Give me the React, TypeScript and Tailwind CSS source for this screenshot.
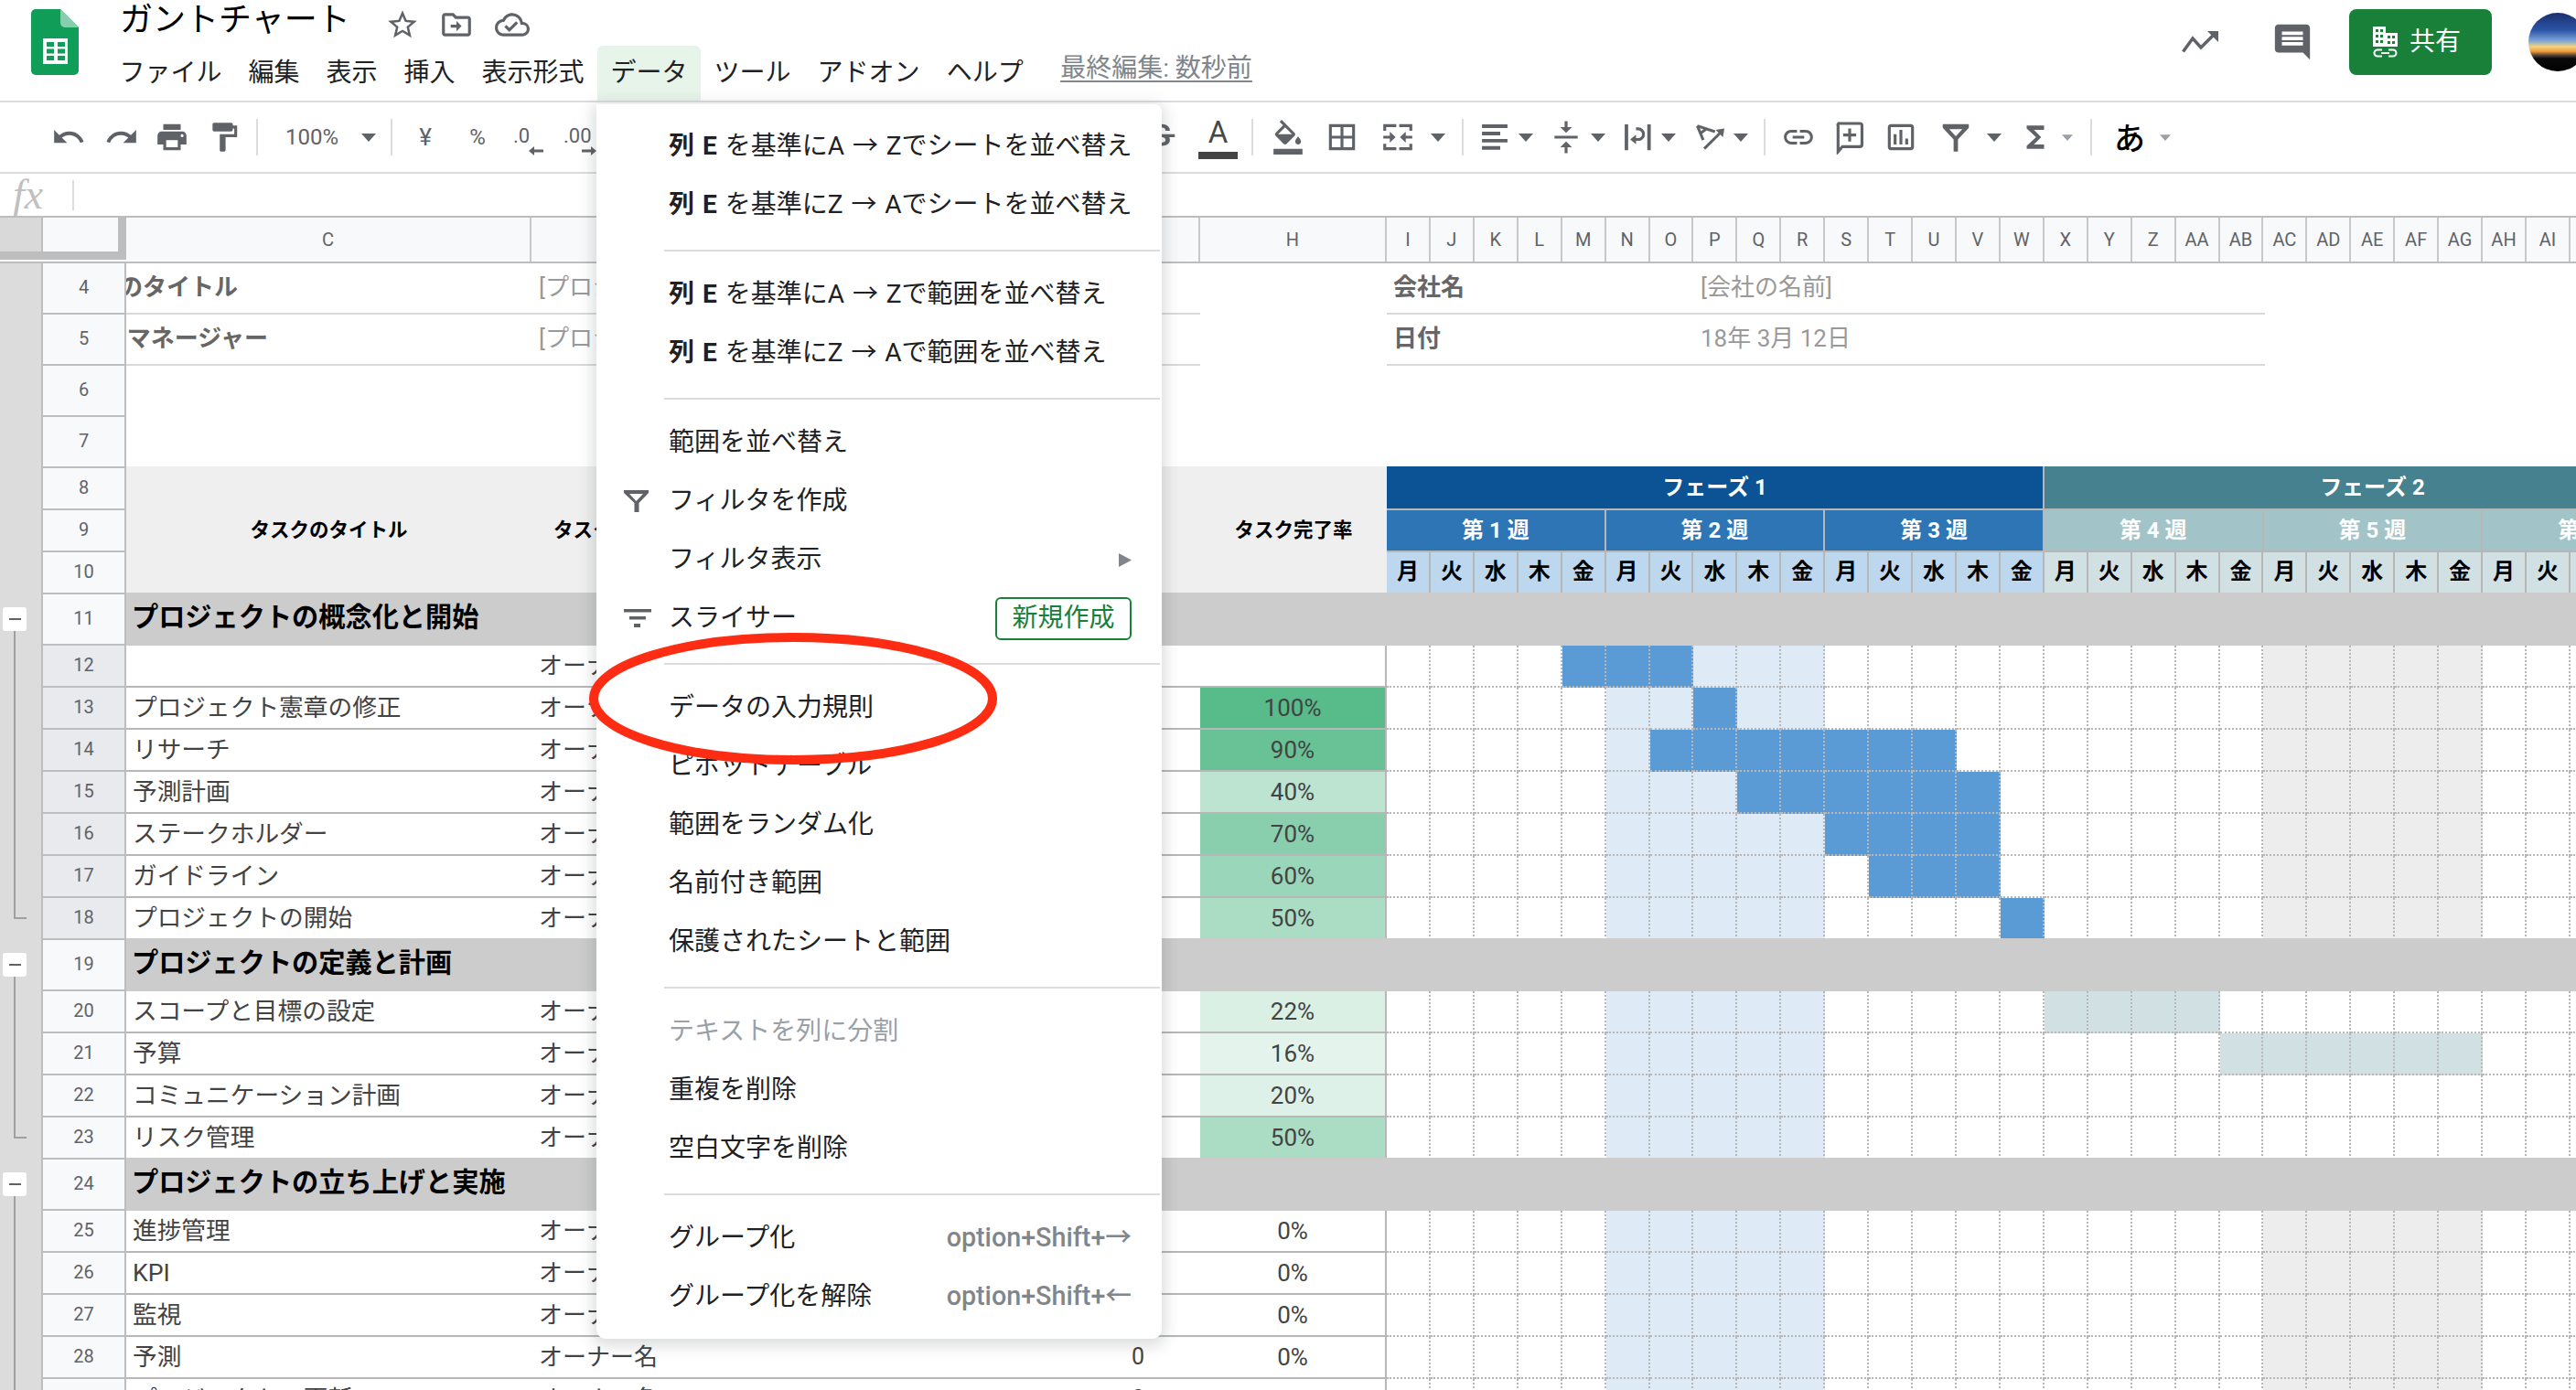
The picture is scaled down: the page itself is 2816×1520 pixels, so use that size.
import clsx from "clsx";
import {
  MdBorderAll,
  MdFormatColorFill,
  MdFormatPaint,
  MdFunctions,
  MdInsertComment,
  MdLink,
  MdOutlineCloudDone,
  MdOutlineInsertChart,
  MdPrint,
  MdRedo,
  MdStarBorder,
  MdStrikethroughS,
  MdUndo,
  MdVerticalAlignCenter,
} from "react-icons/md";

const ICON = "w-[38px] h-[38px] shrink-0 text-[#5f6368]";

function Logo() {
  return (
    <svg viewBox="0 0 52 72" className="w-[52px] h-[72px]">
      <path d="M32 0H5a5 5 0 0 0-5 5v62a5 5 0 0 0 5 5h42a5 5 0 0 0 5-5V20L32 0z" fill="#0f9d58" />
      <path d="M32 0l20 20H37a5 5 0 0 1-5-5V0z" fill="#87ceac" />
      <path d="M13 32h27v28H13z" fill="#fff" />
      <path d="M17 36h8v5h-8zM29 36h8v5h-8zM17 43.500h8v5h-8zM29 43.500h8v5h-8zM17 51h8v5h-8zM29 51h8v5h-8z" fill="#0f9d58" />
    </svg>
  );
}

function Caret({ className, small }: { className?: string; small?: boolean }) {
  return (
    <svg viewBox="0 0 16 9" className={clsx("shrink-0", small ? "w-[12px] h-[7px]" : "w-[16px] h-[9px]", className)}>
      <polygon points="0,0 16,0 8,9" fill={small ? "#9aa0a6" : "#5f6368"} />
    </svg>
  );
}

function Sep({ className }: { className?: string }) {
  return <div className={clsx("w-[2px] h-[40px] bg-[#dadce0] shrink-0", className)} />;
}

function DecimalIcon({ label, dir, className }: { label: string; dir: "l" | "r"; className?: string }) {
  return (
    <div className={clsx("flex flex-col mt-[8px] shrink-0 text-[#5f6368]", className)}>
      <span className="text-[22px] leading-[22px]">{label}</span>
      <svg viewBox="0 0 16 10" className="w-[16px] h-[10px] self-end">
        {dir === "l" ? <path d="M0 5l6-5v3.500h10v3H6V10z" fill="#5f6368" /> : <path d="M16 5l-6-5v3.500H0v3h10V10z" fill="#5f6368" />}
      </svg>
    </div>
  );
}

function Toolbar() {
  return (
    <div className="h-[78px] border-b-2 border-[#dadce0] flex items-center">
      <MdUndo className={clsx(ICON, "ml-[56px]")} />
      <MdRedo className={clsx(ICON, "ml-[20px]")} />
      <MdPrint className={clsx(ICON, "ml-[17px]")} />
      <MdFormatPaint className={clsx(ICON, "ml-[19px]")} />
      <Sep className="ml-[16px]" />
      <span className="ml-[30px] w-[60px] text-[24px] text-[#5f6368] shrink-0">100%</span>
      <Caret className="ml-[23px]" />
      <Sep className="ml-[16px]" />
      <span className="ml-[24px] w-[24px] text-center text-[26px] text-[#5f6368] shrink-0">¥</span>
      <span className="ml-[31px] w-[28px] text-center text-[24px] text-[#5f6368] shrink-0">%</span>
      <DecimalIcon label=".0" dir="l" className="ml-[25px] w-[33px]" />
      <DecimalIcon label=".00" dir="r" className="ml-[22px] w-[36px]" />
      <MdStrikethroughS className={clsx(ICON, "ml-[599px]")} />
      <div className="ml-[21px] mt-[4px] w-[43px] shrink-0 flex flex-col items-center">
        <span className="text-[33px] leading-[30px] text-[#444746]">A</span>
        <div className="w-[43px] h-[8px] bg-[#444] mt-[6px]" />
      </div>
      <Sep className="ml-[15px]" />
      <MdFormatColorFill className={clsx(ICON, "ml-[19px]")} />
      <MdBorderAll className={clsx(ICON, "ml-[21px]")} />
      <svg viewBox="0 0 24 24" className={clsx(ICON, "ml-[23px]")} fill="currentColor">
        <path d="M2 3h9v2H4v2.500H2zM22 3h-9v2h7v2.500h2zM2 21h9v-2H4v-2.500H2zM22 21h-9v-2h7v-2.500h2zM2 11h4.500V8.200L10.500 12l-4 3.800V13H2zM22 11h-4.500V8.200L13.500 12l4 3.800V13H22z" />
      </svg>
      <Caret className="ml-[17px]" />
      <Sep className="ml-[18px]" />
      <svg viewBox="0 0 24 24" className={clsx(ICON, "ml-[15px]")} fill="currentColor">
        <path d="M3.200 3.200h17.600v2.500H3.200zM3.200 8.200h12.600v2.500H3.200zM3.200 13.200h17.600v2.500H3.200zM3.200 18.200h12.600v2.500H3.200z" />
      </svg>
      <Caret className="ml-[7px]" />
      <MdVerticalAlignCenter className={clsx(ICON, "ml-[17px]")} />
      <Caret className="ml-[8px]" />
      <svg viewBox="0 0 24 24" className={clsx(ICON, "ml-[16px]")}>
        <path d="M3.200 3.200h2.400V21H3.200zM18.800 3.200h2.400V21h-2.400z" fill="currentColor" />
        <path d="M11 6.200h1.500a3.700 3.700 0 0 1 0 7.400H10" fill="none" stroke="currentColor" strokeWidth="2" />
        <path d="M7 13.600l4-3.300v6.600z" fill="currentColor" />
      </svg>
      <Caret className="ml-[7px]" />
      <svg viewBox="0 0 24 24" className={clsx(ICON, "ml-[19px]")}>
        <path d="M2.800 4.200L15 8.200M2.800 4.200L6.900 14M4.800 9.500L9.600 5.900M7.600 20L19.500 8.200" fill="none" stroke="currentColor" strokeWidth="1.900" />
        <path d="M21.500 6l-6 1 5 5z" fill="currentColor" />
      </svg>
      <Caret className="ml-[6px]" />
      <Sep className="ml-[17px]" />
      <MdLink className={clsx(ICON, "ml-[17px]")} />
      <svg viewBox="0 0 24 24" className={clsx(ICON, "ml-[18px]")} fill="none" stroke="currentColor" strokeWidth="2">
        <path d="M5 2.500h14a1.500 1.500 0 0 1 1.500 1.500v13a1.500 1.500 0 0 1-1.500 1.500H7L4 22V4a1 1 0 0 1 1-1.500zM12 6v9M7.500 10.500h9" />
      </svg>
      <MdOutlineInsertChart className={clsx(ICON, "ml-[18px]")} />
      <FilterIcon className={clsx(ICON, "ml-[22px]")} />
      <Caret className="ml-[15px]" />
      <MdFunctions className={clsx(ICON, "ml-[18px]")} />
      <Caret small className="ml-[10px]" />
      <Sep className="ml-[19px]" />
      <span className="ml-[24px] mt-[4px] w-[34px] text-[34px] leading-none text-black font-medium shrink-0">あ</span>
      <Caret small className="ml-[16px]" />
    </div>
  );
}

function FilterIcon({ className }: { className?: string }) {
  return (
    <svg viewBox="0 0 24 24" className={className} fill="currentColor">
      <path fillRule="evenodd" d="M3 3h18v2.500l-7.500 8V22h-3v-8.500L3 5.500V3zm4.500 3.500L12 11.300l4.500-4.800h-9z" />
    </svg>
  );
}

function TitleBar() {
  const menus = ["ファイル", "編集", "表示", "挿入", "表示形式", "データ", "ツール", "アドオン", "ヘルプ"];
  return (
    <div className="h-[112px] border-b-2 border-[#dadce0] flex">
      <div className="pl-[34px] pt-[10px] w-[131px] shrink-0">
        <Logo />
      </div>
      <div className="flex flex-col shrink-0">
        <div className="h-[52px] flex items-center pt-[4px]">
          <span className="text-[36px] leading-none text-black -mt-[11px] w-[252px]">ガントチャート</span>
          <MdStarBorder className={clsx(ICON, "ml-[38px]")} />
          <svg viewBox="0 0 24 24" className={clsx(ICON, "ml-[21px]")} fill="currentColor">
            <path d="M20 6h-8l-2-2H4c-1.100 0-2 .9-2 2v12c0 1.100.9 2 2 2h16c1.100 0 2-.9 2-2V8c0-1.100-.9-2-2-2zm0 12H4V6h5.170l2 2H20v10zM12 9.500l3.500 3.500-3.500 3.500V14H8v-2h4V9.500z" />
          </svg>
          <MdOutlineCloudDone className={clsx(ICON, "ml-[23px]")} />
        </div>
        <div className="h-[62px] flex items-center -ml-[15px]">
          {menus.map((m) => (
            <div
              key={m}
              className={clsx(
                "h-full px-[14.5px] flex items-center text-[28px] text-[#202124]",
                m === "データ" && "bg-[#e6f4ea] rounded-t-[6px]"
              )}
            >
              {m}
            </div>
          ))}
          <span className="ml-[26px] pb-[10px] text-[28px] text-[#80868b] underline underline-offset-[4px] decoration-2 whitespace-nowrap">
            最終編集: 数秒前
          </span>
        </div>
      </div>
      <div className="ml-auto -mr-[12px] h-[92px] flex items-center shrink-0">
        <svg viewBox="0 0 40 24" className="w-[40px] h-[24px]">
          <path d="M1.500 22.500L12 8l9 10L34 5" fill="none" stroke="#5f6368" strokeWidth="3.500" />
          <path d="M28 0h12v12z" fill="#5f6368" />
        </svg>
        <MdInsertComment className="ml-[58px] w-[46px] h-[46px] text-[#5f6368]" />
        <button className="ml-[39px] w-[156px] h-[72px] rounded-[8px] bg-[#188038] text-white flex items-center pl-[26px]">
          <svg viewBox="0 0 27 34" className="w-[27px] h-[34px]">
            <path fillRule="evenodd" d="M0 0h14v7h13v15H0V0zm3 3v3h3V3H3zm5 0v3h3V3H8zM3 9v3h3V9H3zm5 0v3h3V9H8zm8 1v3h3v-3h-3zm5 0v3h3v-3h-3zM3 15v3h3v-3H3zm5 0v3h3v-3H8zm8 1v3h3v-3h-3zm5 0v3h3v-3h-3z" fill="#fff" />
            <path d="M10 25.500H5a3.500 3.500 0 0 0 0 7h5M17 25.500h5a3.500 3.500 0 0 1 0 7h-5M9 29h9" fill="none" stroke="#fff" strokeWidth="2" />
          </svg>
          <span className="ml-[13px] text-[28px]">共有</span>
        </button>
        <div className="ml-[40px] w-[64px] h-[64px] rounded-full bg-[linear-gradient(180deg,#1c2f6e_0%,#2c55a8_30%,#7fa6d8_48%,#f6d37a_58%,#ef9a3c_66%,#5c4a3c_72%,#0a0a0a_78%,#000_100%)]" />
      </div>
    </div>
  );
}

function FormulaBar() {
  return (
    <div className="h-[46px] flex items-center pl-[14px]">
      <span className="font-[family-name:'Liberation_Serif',serif] italic text-[46px] leading-none text-[#c0c0c0] w-[65px]">fx</span>
      <div className="w-[2px] h-[33px] bg-[#dadce0]" />
    </div>
  );
}

const COLS = ["I", "J", "K", "L", "M", "N", "O", "P", "Q", "R", "S", "T", "U", "V", "W", "X", "Y", "Z", "AA", "AB", "AC", "AD", "AE", "AF", "AG", "AH", "AI", "AJ"];

function ColumnHeader() {
  const cell = "h-full shrink-0 flex items-center justify-center border-r-2 border-[#c8c8c8]";
  return (
    <div className="h-[52px] flex border-y-2 border-[#bdbdbd] text-[20px] text-[#5f6368] bg-[#f8f9fa] shrink-0">
      <div className="w-[45px] h-[46px] bg-[#d9d9d9] border-b-[9px] border-[#bdbdbd] shrink-0" />
      <div className="w-[93px] h-[46px] bg-[#f8f9fa] border-l-2 border-r-[9px] border-b-[9px] border-[#bdbdbd] shrink-0" />
      <div className={clsx(cell, "w-[443px]")}>C</div>
      <div className={clsx(cell, "w-[731px]")}>D</div>
      <div className={clsx(cell, "w-[204px]")}>H</div>
      {COLS.map((c) => (
        <div key={c} className={clsx(cell, "w-[47.93px]")}>{c}</div>
      ))}
    </div>
  );
}

type GutterKind = "box" | "line" | "end" | "none";

function Gutter({ kind }: { kind: GutterKind }) {
  return (
    <div className="relative w-[45px] h-full bg-[#dcdcdc] shrink-0">
      {kind === "box" && (
        <>
          <div className="absolute left-[3px] top-[14px] w-[26px] h-[26px] rounded-[3px] bg-white flex items-center justify-center">
            <div className="w-[13px] h-[2px] bg-[#5f6368]" />
          </div>
          <div className="absolute left-[15px] top-[40px] bottom-0 w-[2px] bg-[#a0a0a0]" />
        </>
      )}
      {kind === "line" && <div className="absolute left-[15px] top-0 bottom-0 w-[2px] bg-[#a0a0a0]" />}
      {kind === "end" && (
        <>
          <div className="absolute left-[15px] top-0 h-[23px] w-[2px] bg-[#a0a0a0]" />
          <div className="absolute left-[15px] top-[21px] h-[2px] w-[14px] bg-[#a0a0a0]" />
        </>
      )}
    </div>
  );
}

function Row({
  num,
  h,
  gutter = "none",
  active,
  children,
}: {
  num: number;
  h: string;
  gutter?: GutterKind;
  active?: boolean;
  children?: React.ReactNode;
}) {
  return (
    <div className={clsx("flex shrink-0", h)}>
      <Gutter kind={gutter} />
      <div
        className={clsx(
          "w-[93px] h-full shrink-0 flex items-center justify-center pb-[2px] border-x-2 border-b-2 border-[#bdbdbd] text-[20px] text-[#5f6368]",
          active ? "bg-[#e8eaed]" : "bg-[#f8f9fa]"
        )}
      >
        {num}
      </div>
      {children}
    </div>
  );
}

function InfoRow({ num, title, titleW, company, value, label }: { num: number; title: string; titleW: string; company: string; value: string; label: string }) {
  return (
    <Row num={num} h="h-[56px]">
      <div className="w-[443px] h-full shrink-0 pb-[2px] border-b-2 border-[#d9d9d9] overflow-hidden flex items-center">
        <div className={clsx("overflow-hidden flex justify-end text-[26px] font-bold text-[#666] whitespace-nowrap", titleW)}>
          {title}
        </div>
      </div>
      <div className="w-[731px] h-full shrink-0 pb-[2px] border-b-2 border-[#d9d9d9] flex items-center pl-[8px] text-[26px] text-[#999] whitespace-nowrap overflow-hidden">
        {company}
      </div>
      <div className="w-[204px] shrink-0" />
      <div className="w-[960px] h-full shrink-0 pb-[2px] border-b-2 border-[#d9d9d9] flex items-center pl-[7px] text-[26px]">
        <span className="w-[336px] font-bold text-[#666]">{label}</span>
        <span className="text-[#999]">{value}</span>
      </div>
    </Row>
  );
}

function GroupRow({ num, title }: { num: number; title: string }) {
  return (
    <Row num={num} h="h-[56px]" gutter="box">
      <div className="flex-1 h-[58px] -mt-[2px] pb-[2px] bg-[#cccccc] flex items-center pl-[6px] text-[29.200px] font-bold text-black whitespace-nowrap">
        {title}
      </div>
    </Row>
  );
}

type Task = {
  num: number;
  name: string;
  pct: string;
  pctBg: string;
  blue?: [number, number];
  teal?: [number, number];
  gray: boolean;
  gutter: GutterKind;
  active?: boolean;
  count?: string;
};

function GanttCell({ i, task }: { i: number; task: Task }) {
  const inBlue = task.blue && i >= task.blue[0] && i <= task.blue[1];
  const inTeal = task.teal && i >= task.teal[0] && i <= task.teal[1];
  return (
    <div
      className={clsx(
        "w-[47.93px] h-full shrink-0 border-r-2 border-b-2 border-dotted border-[#b7b7b7]",
        inBlue
          ? "bg-[#5b9bd5]"
          : inTeal
            ? "bg-[#d0e0e3]"
            : i >= 5 && i <= 9
              ? "bg-[#deebf7]"
              : task.gray && i >= 20 && i <= 24
                ? "bg-[#ededed]"
                : "bg-white"
      )}
    />
  );
}

function TaskRow({ task }: { task: Task }) {
  return (
    <Row num={task.num} h="h-[46px]" gutter={task.gutter} active={task.active}>
      <div className="w-[443px] h-full shrink-0 border-b-2 border-[#b7b7b7] flex items-center pl-[7px] text-[26.700px] text-[#434343] whitespace-nowrap">
        {task.name}
      </div>
      <div className="w-[731px] h-full shrink-0 border-b-2 border-[#b7b7b7] flex items-center justify-between pl-[8px] pr-[61px] text-[26px] text-[#434343]">
        <span>オーナー名</span>
        <span className="text-[25px]">{task.count}</span>
      </div>
      <div className={clsx("w-[204px] h-full shrink-0 border-b-2 border-r-2 border-[#b7b7b7] flex items-center justify-center text-[26px] text-[#434343]", task.pctBg)}>
        {task.pct}
      </div>
      {COLS.map((c, i) => (
        <GanttCell key={c} i={i} task={task} />
      ))}
    </Row>
  );
}

const TASKS_A: Task[] = [
  { num: 12, name: "", pct: "", pctBg: "bg-white", blue: [4, 6], gray: true, gutter: "line", active: true },
  { num: 13, name: "プロジェクト憲章の修正", pct: "100%", pctBg: "bg-[#57bb8a]", blue: [7, 7], gray: true, gutter: "line", active: true },
  { num: 14, name: "リサーチ", pct: "90%", pctBg: "bg-[#68c296]", blue: [6, 12], gray: true, gutter: "line", active: true },
  { num: 15, name: "予測計画", pct: "40%", pctBg: "bg-[#bce4d0]", blue: [8, 13], gray: true, gutter: "line", active: true },
  { num: 16, name: "ステークホルダー", pct: "70%", pctBg: "bg-[#89cfad]", blue: [10, 13], gray: true, gutter: "line", active: true },
  { num: 17, name: "ガイドライン", pct: "60%", pctBg: "bg-[#9ad6b9]", blue: [11, 13], gray: true, gutter: "line", active: true },
  { num: 18, name: "プロジェクトの開始", pct: "50%", pctBg: "bg-[#abddc5]", blue: [14, 14], gray: true, gutter: "end", active: true },
];

const TASKS_B: Task[] = [
  { num: 20, name: "スコープと目標の設定", pct: "22%", pctBg: "bg-[#daf0e5]", teal: [15, 18], gray: false, gutter: "line" },
  { num: 21, name: "予算", pct: "16%", pctBg: "bg-[#e4f4ec]", teal: [19, 24], gray: false, gutter: "line" },
  { num: 22, name: "コミュニケーション計画", pct: "20%", pctBg: "bg-[#ddf1e8]", gray: false, gutter: "line" },
  { num: 23, name: "リスク管理", pct: "50%", pctBg: "bg-[#abddc5]", gray: false, gutter: "end" },
];

const TASKS_C: Task[] = [
  { num: 25, name: "進捗管理", pct: "0%", pctBg: "bg-white", gray: true, gutter: "line" },
  { num: 26, name: "KPI", pct: "0%", pctBg: "bg-white", gray: true, gutter: "line" },
  { num: 27, name: "監視", pct: "0%", pctBg: "bg-white", gray: true, gutter: "line" },
  { num: 28, name: "予測", pct: "0%", pctBg: "bg-white", gray: true, gutter: "line", count: "0" },
  { num: 29, name: "プロジェクトの更新", pct: "0%", pctBg: "bg-white", gray: true, gutter: "line", count: "0" },
];

const DAYS = ["月", "火", "水", "木", "金"];

function HeaderRows() {
  const left = "bg-[#efefef] h-full shrink-0 flex items-center";
  const thick = "border-r-2 border-b-2 border-[#b7b7b7] h-full shrink-0 flex items-center justify-center font-bold";
  return (
    <>
      <Row num={8} h="h-[46px]">
        <div className="flex h-[48px] -mt-[2px]">
          <div className={clsx(left, "w-[1378px]")} />
          <div className={clsx(thick, "w-[718.95px] bg-[#0b5394] text-white text-[24px]")}>フェーズ 1</div>
          <div className={clsx(thick, "w-[718.95px] bg-[#45818e] text-white text-[24px]")}>フェーズ 2</div>
        </div>
      </Row>
      <Row num={9} h="h-[46px]">
        <div className={clsx(left, "w-[443px] justify-center pb-[2px] text-[21.500px] font-bold text-black")}>タスクのタイトル</div>
        <div className={clsx(left, "w-[731px] pl-[24px] pb-[2px] text-[21.500px] font-bold text-black")}>タスクのオーナー</div>
        <div className={clsx(left, "w-[204px] justify-center pb-[2px] text-[21.500px] font-bold text-black")}>タスク完了率</div>
        {[1, 2, 3].map((n) => (
          <div key={n} className={clsx(thick, "w-[239.65px] bg-[#2e75b5] text-white text-[24px]")}>第 {n} 週</div>
        ))}
        {[4, 5, 6].map((n) => (
          <div key={n} className={clsx(thick, "w-[239.65px] bg-[#a2c4c9] text-white text-[24px]")}>第 {n} 週</div>
        ))}
      </Row>
      <Row num={10} h="h-[46px]">
        <div className={clsx(left, "w-[1378px]")} />
        {COLS.map((c, i) => (
          <div
            key={c}
            className={clsx(thick, "w-[47.93px] pb-[2px] text-black text-[24px]", i < 15 ? "bg-[#bdd7ee]" : "bg-[#d0e0e3]")}
          >
            {DAYS[i % 5]}
          </div>
        ))}
      </Row>
    </>
  );
}

function Sheet() {
  return (
    <div className="flex flex-col">
      <ColumnHeader />
      <InfoRow num={4} title="プロジェクトのタイトル" titleW="w-[122px]" company="[プロジェクト名]" label="会社名" value="[会社の名前]" />
      <InfoRow num={5} title="プロジェクトマネージャー" titleW="w-[155px]" company="[プロジェクトマネージャー名]" label="日付" value="18年 3月 12日" />
      <Row num={6} h="h-[56px]" />
      <Row num={7} h="h-[56px]" />
      <HeaderRows />
      <GroupRow num={11} title="プロジェクトの概念化と開始" />
      {TASKS_A.map((t) => (
        <TaskRow key={t.num} task={t} />
      ))}
      <GroupRow num={19} title="プロジェクトの定義と計画" />
      {TASKS_B.map((t) => (
        <TaskRow key={t.num} task={t} />
      ))}
      <GroupRow num={24} title="プロジェクトの立ち上げと実施" />
      {TASKS_C.map((t) => (
        <TaskRow key={t.num} task={t} />
      ))}
    </div>
  );
}

function MenuItem({
  icon,
  right,
  disabled,
  spaced,
  children,
}: {
  icon?: React.ReactNode;
  right?: React.ReactNode;
  disabled?: boolean;
  spaced?: boolean;
  children: React.ReactNode;
}) {
  return (
    <div className={clsx("h-[64px] flex items-center pl-[30px] pr-[33px] text-[28px]", disabled ? "text-[#9aa0a6]" : "text-[#202124]")}>
      <span className="w-[49px] shrink-0 flex items-center">{icon}</span>
      <span className={clsx("flex-1 whitespace-nowrap", spaced && "[word-spacing:2px]")}>{children}</span>
      {right}
    </div>
  );
}

function Divider() {
  return <div className="ml-[74px] mr-[2px] mt-[17px] mb-[15px] h-[2px] bg-[#dadce0]" />;
}

function Shortcut({ children }: { children: React.ReactNode }) {
  return <span className="text-[28.700px] font-medium text-[#80868b] whitespace-nowrap">{children}</span>;
}

function DataMenu() {
  return (
    <div className="absolute left-[652px] top-[114px] z-10 w-[618px] h-[1350px] pt-[14px] bg-white rounded-b-[10px] rounded-tr-[8px] shadow-[0_4px_16px_4px_rgba(60,64,67,0.18)]">
      <MenuItem spaced><b>列 E</b> を基準にA → Zでシートを並べ替え</MenuItem>
      <MenuItem spaced><b>列 E</b> を基準にZ → Aでシートを並べ替え</MenuItem>
      <Divider />
      <MenuItem spaced><b>列 E</b> を基準にA → Zで範囲を並べ替え</MenuItem>
      <MenuItem spaced><b>列 E</b> を基準にZ → Aで範囲を並べ替え</MenuItem>
      <Divider />
      <MenuItem>範囲を並べ替え</MenuItem>
      <MenuItem
        icon={
          <svg viewBox="0 0 27 24" className="w-[27px] h-[24px]">
            <path fillRule="evenodd" d="M0 0h27v3l-10.500 11v10h-5V14L0 3V0zm6 4l7.500 8L21 4H6z" fill="#5f6368" />
          </svg>
        }
      >
        フィルタを作成
      </MenuItem>
      <MenuItem
        right={
          <svg viewBox="0 0 14 15" className="w-[14px] h-[15px]">
            <polygon points="0,0 14,7.500 0,15" fill="#80868b" />
          </svg>
        }
      >
        フィルタ表示
      </MenuItem>
      <MenuItem
        icon={
          <svg viewBox="0 0 30 20" className="w-[30px] h-[20px]">
            <path d="M0 0h30v3.500H0zM6 8h18v3.500H6zM11 16h7v4h-7z" fill="#5f6368" />
          </svg>
        }
        right={
          <div className="w-[149px] h-[47px] rounded-[6px] border-2 border-[#188038] text-[#188038] flex items-center justify-center text-[28px]">
            新規作成
          </div>
        }
      >
        スライサー
      </MenuItem>
      <Divider />
      <MenuItem>データの入力規則</MenuItem>
      <MenuItem>ピボットテーブル</MenuItem>
      <MenuItem>範囲をランダム化</MenuItem>
      <MenuItem>名前付き範囲</MenuItem>
      <MenuItem>保護されたシートと範囲</MenuItem>
      <Divider />
      <MenuItem disabled>テキストを列に分割</MenuItem>
      <MenuItem>重複を削除</MenuItem>
      <MenuItem>空白文字を削除</MenuItem>
      <Divider />
      <MenuItem right={<Shortcut>option+Shift+→</Shortcut>}>グループ化</MenuItem>
      <MenuItem right={<Shortcut>option+Shift+←</Shortcut>}>グループ化を解除</MenuItem>
    </div>
  );
}

export default function App() {
  return (
    <div className="relative w-[2816px] h-[1520px] overflow-hidden bg-white font-[family-name:Roboto,'Noto_Sans_CJK_JP',sans-serif]">
      <TitleBar />
      <Toolbar />
      <FormulaBar />
      <Sheet />
      <DataMenu />
      <svg viewBox="0 0 460 160" className="absolute left-[640px] top-[685px] z-20 w-[460px] h-[160px] pointer-events-none">
        <ellipse cx="227" cy="79" rx="218" ry="67" fill="none" stroke="#fe2c12" strokeWidth="10" />
      </svg>
    </div>
  );
}
